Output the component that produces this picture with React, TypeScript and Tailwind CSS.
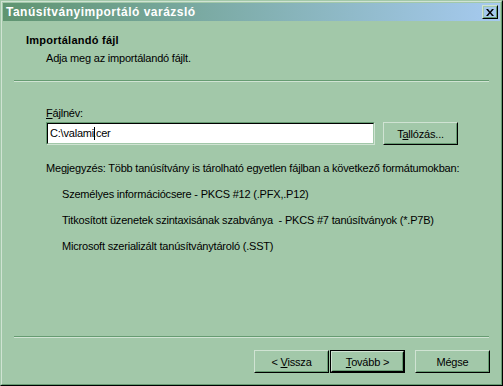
import React from "react";

function WinButton({
    children,
    isDefault,
}: {
    children: React.ReactNode;
    isDefault?: boolean;
}) {
    const bevel = (
        <div className="h-full w-full border border-t-[#d0e3d3] border-l-[#d0e3d3] border-r-black border-b-black">
            <div className="flex h-full w-full items-center justify-center border border-t-[#a2c8a9] border-l-[#a2c8a9] border-r-[#669c72] border-b-[#669c72] pt-px">
                {children}
            </div>
        </div>
    );
    if (isDefault) {
        return (
            <div className="h-[23px] w-[75px] border border-black">
                {bevel}
            </div>
        );
    }
    return <div className="h-[23px] w-[75px]">{bevel}</div>;
}

function Separator() {
    return (
        <div className="mx-[11px] flex flex-col">
            <div className="h-px bg-[#669c72]" />
            <div className="h-px bg-[#d0e3d3]" />
        </div>
    );
}

export default function App() {
    return (
        <div className="h-[386px] w-[503px] border border-t-[#a2c8a9] border-l-[#a2c8a9] border-r-black border-b-black bg-[#a2c8a9] font-['Liberation_Sans',Arial,sans-serif] text-[11px] leading-[13px] tracking-[-0.2px] text-black">
            <div className="flex h-full w-full flex-col border border-t-[#d0e3d3] border-l-[#d0e3d3] border-r-[#669c72] border-b-[#669c72] p-px">
                {/* title bar */}
                <div className="flex h-[18px] items-center justify-between bg-gradient-to-r from-[#5f9470] to-[#a6caf0] pl-[3px] pr-[2px]">
                    <span className="text-[12px] font-bold tracking-[0.5px] text-white">
                        Tanúsítványimportáló varázsló
                    </span>
                    <div className="h-[14px] w-[16px] border border-t-[#d0e3d3] border-l-[#d0e3d3] border-r-black border-b-black">
                        <div className="flex h-full w-full items-center justify-center border border-t-[#a2c8a9] border-l-[#a2c8a9] border-r-[#669c72] border-b-[#669c72]">
                            <svg width="8" height="7" viewBox="0 0 8 7">
                                <path
                                    d="M0 0h2l2 2.5L6 0h2L5 3.5 8 7H6L4 4.5 2 7H0l3-3.5z"
                                    fill="black"
                                />
                            </svg>
                        </div>
                    </div>
                </div>

                {/* body */}
                <div className="mt-px flex flex-1 flex-col">
                    <div className="h-[58px] pl-[23px] pt-[12px]">
                        <div className="font-bold tracking-[0.25px]">
                            Importálandó fájl
                        </div>
                        <div className="mt-[5px] pl-[20px]">
                            Adja meg az importálandó fájlt.
                        </div>
                    </div>
                    <Separator />

                    <div className="pl-[43px] pt-[25px]">
                        <div>
                            <u className="underline-offset-1">F</u>ájlnév:
                        </div>
                        <div className="mt-[2px] flex">
                            <div className="h-[23px] w-[329px] border border-t-[#669c72] border-l-[#669c72] border-r-[#d0e3d3] border-b-[#d0e3d3]">
                                <div className="flex h-full w-full items-center border border-t-black border-l-black border-r-[#a2c8a9] border-b-[#a2c8a9] bg-white pl-[2px]">
                                    <span>C:\valami</span>
                                    <span className="-mr-[2px] inline-block h-[13px] w-px bg-black" />
                                    <span>.cer</span>
                                </div>
                            </div>
                            <div className="ml-[8px]">
                                <WinButton>
                                    <span>
                                        T<u className="underline-offset-1">a</u>llózás...
                                    </span>
                                </WinButton>
                            </div>
                        </div>

                        <div className="mt-[17px]">
                            Megjegyzés: Több tanúsítvány is tárolható
                            egyetlen fájlban a következő formátumokban:
                        </div>
                        <div className="flex flex-col gap-[13px] pl-[16px] pt-[13px]">
                            <div>
                                Személyes információcsere - PKCS #12
                                (.PFX,.P12)
                            </div>
                            <div className="whitespace-pre">
                                Titkosított üzenetek szintaxisának szabványa  - PKCS #7 tanúsítványok (*.P7B)
                            </div>
                            <div>
                                Microsoft szerializált tanúsítványtároló
                                (.SST)
                            </div>
                        </div>
                    </div>

                    <div className="flex-1" />
                    <Separator />
                    <div className="flex justify-end pb-[10px] pr-[10px] pt-[12px]">
                        <WinButton>
                            <span>
                                &lt; <u className="underline-offset-1">V</u>issza
                            </span>
                        </WinButton>
                        <div className="ml-px">
                            <WinButton isDefault>
                                <span>
                                    <u className="underline-offset-1">T</u>ovább &gt;
                                </span>
                            </WinButton>
                        </div>
                        <div className="ml-[10px]">
                            <WinButton>
                                <span>Mégse</span>
                            </WinButton>
                        </div>
                    </div>
                </div>
            </div>
        </div>
    );
}
